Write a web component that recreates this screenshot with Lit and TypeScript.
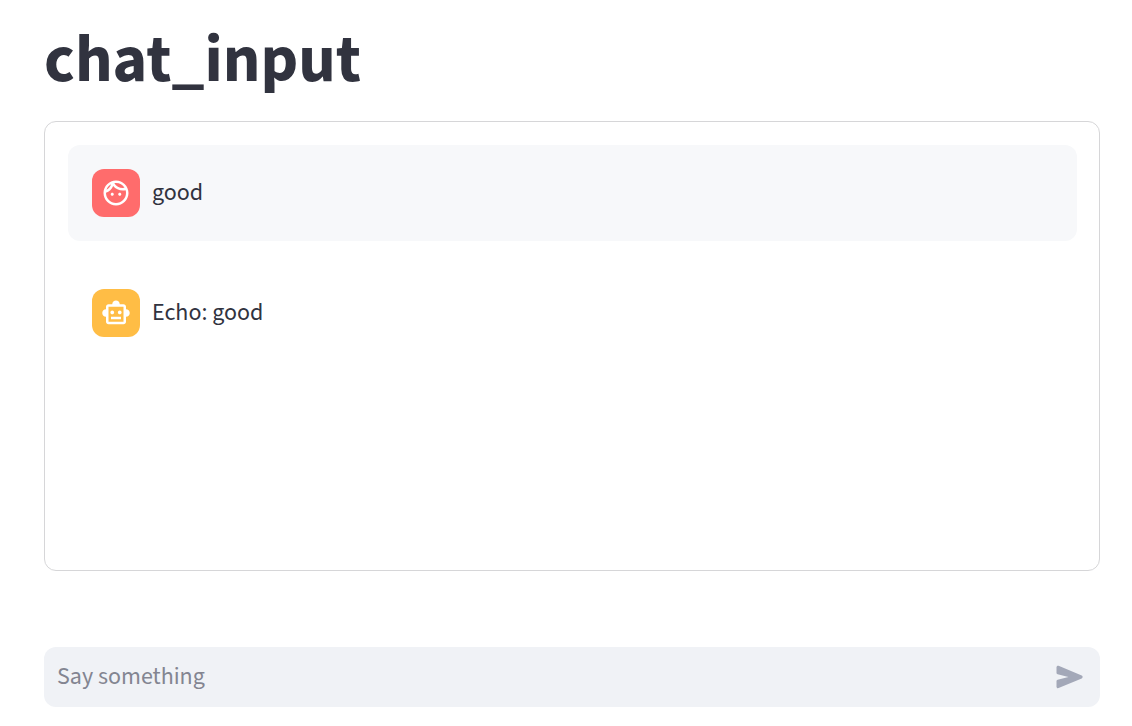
import { LitElement, html, css } from "lit";
import { customElement, state } from "lit/decorators.js";

interface Message {
  role: "user" | "assistant";
  text: string;
}

@customElement("chat-message")
class ChatMessage extends LitElement {
  static properties = { role: { type: String }, text: { type: String } };
  declare role: string;
  declare text: string;

  static styles = css`
    :host { display: block; }
    .message {
      display: flex;
      align-items: center;
      gap: 12px;
      padding: 24px;
      border-radius: 12px;
    }
    .user { background: #f7f8fa; }
    .avatar {
      display: grid;
      place-items: center;
      flex: none;
      width: 48px;
      height: 48px;
      border-radius: 12px;
      background: #ffbd45;
    }
    .user .avatar { background: #ff6c6c; }
    .avatar svg { width: 30px; height: 30px; fill: #fff; }
    .text { margin: 0; font-size: 24px; line-height: 36px; }
  `;

  render() {
    const user = this.role === "user";
    return html`
      <article class="message ${user ? "user" : "assistant"}">
        <div class="avatar">
          ${user
            ? html`<svg viewBox="0 0 24 24" aria-hidden="true"><path d="M10.25 13c0 .69-.56 1.25-1.25 1.25S7.75 13.69 7.75 13s.56-1.25 1.25-1.25 1.25.56 1.25 1.25zM15 11.75c-.69 0-1.25.56-1.25 1.25s.56 1.25 1.25 1.25 1.25-.56 1.25-1.25-.56-1.25-1.25-1.25zm7 .25c0 5.52-4.48 10-10 10S2 17.52 2 12 6.48 2 12 2s10 4.48 10 10zM10.66 4.12C12.06 6.44 14.6 8 17.5 8c.46 0 .91-.05 1.34-.12C17.44 5.56 14.9 4 12 4c-.46 0-.91.05-1.34.12zM4.42 9.47c1.71-.97 3.03-2.55 3.66-4.44C6.37 6 5.05 7.58 4.42 9.47zM20 12c0-.78-.12-1.53-.33-2.24-.7.15-1.42.24-2.17.24-3.13 0-5.92-1.44-7.76-3.69C8.69 8.87 6.6 10.88 4 11.86c.01.04 0 .09 0 .14 0 4.41 3.59 8 8 8s8-3.59 8-8z"/></svg>`
            : html`<svg viewBox="0 0 24 24" aria-hidden="true"><path d="M20 9V7c0-1.1-.9-2-2-2h-3c0-1.66-1.34-3-3-3S9 3.34 9 5H6c-1.1 0-2 .9-2 2v2c-1.66 0-3 1.34-3 3s1.34 3 3 3v4c0 1.1.9 2 2 2h12c1.1 0 2-.9 2-2v-4c1.66 0 3-1.34 3-3s-1.34-3-3-3zm-2 10H6V7h12v12zm-9-6c-.83 0-1.5-.67-1.5-1.5S8.17 10 9 10s1.5.67 1.5 1.5S9.83 13 9 13zm7.5-1.5c0 .83-.67 1.5-1.5 1.5s-1.5-.67-1.5-1.5.67-1.5 1.5-1.5 1.5.67 1.5 1.5zM8 15h8v2H8v-2z"/></svg>`}
        </div>
        <p class="text">${this.text}</p>
      </article>
    `;
  }
}

@customElement("app-root")
class AppRoot extends LitElement {
  @state() private messages: Message[] = [
    { role: "user", text: "good" },
    { role: "assistant", text: "Echo: good" },
  ];

  static styles = css`
    :host {
      display: block;
      box-sizing: border-box;
      padding: 24px 32px 19px 44px;
      font-family: "Source Sans 3", "Source Sans Pro", "Noto Sans", sans-serif;
      color: #31333f;
    }
    .title {
      margin: 0 0 25px;
      font-size: 66px;
      font-weight: 700;
      line-height: 72px;
    }
    .history {
      display: flex;
      flex-direction: column;
      gap: 24px;
      box-sizing: border-box;
      min-height: 450px;
      padding: 23px 22px 23px 23px;
      border: 1px solid #d6d6d8;
      border-radius: 12px;
    }
    .composer {
      display: flex;
      align-items: center;
      box-sizing: border-box;
      margin-top: 76px;
      min-height: 60px;
      padding: 0 12px 0 13px;
      border-radius: 12px;
      background: #f0f2f6;
    }
    .field {
      flex: 1;
      min-width: 0;
      padding: 0;
      border: 0;
      outline: 0;
      background: none;
      font: inherit;
      font-size: 24px;
      line-height: 36px;
      color: inherit;
    }
    .field::placeholder { color: #838591; opacity: 1; }
    .send {
      display: grid;
      place-items: center;
      padding: 0;
      border: 0;
      background: none;
      color: #a3a8b8;
    }
    .send svg { width: 36px; height: 36px; fill: currentColor; }
  `;

  private submit(event: Event) {
    event.preventDefault();
    const field = this.renderRoot.querySelector<HTMLInputElement>(".field")!;
    const text = field.value.trim();
    if (!text) return;
    this.messages = [
      ...this.messages,
      { role: "user", text },
      { role: "assistant", text: `Echo: ${text}` },
    ];
    field.value = "";
  }

  render() {
    return html`
      <main>
        <h1 class="title">chat_input</h1>
        <section class="history" aria-label="Messages">
          ${this.messages.map(
            (m) => html`<chat-message .role=${m.role} .text=${m.text}></chat-message>`
          )}
        </section>
        <form class="composer" @submit=${this.submit}>
          <input class="field" type="text" placeholder="Say something" aria-label="Say something" />
          <button class="send" type="submit" aria-label="Send">
            <svg viewBox="0 0 24 24" aria-hidden="true"><path d="M3 5.51v3.71c0 .46.31.86.76.97L11 12l-7.24 1.81c-.45.11-.76.51-.76.97v3.71c0 .72.73 1.2 1.39.92l15.42-6.49c.82-.34.82-1.5 0-1.84L4.39 4.58C3.73 4.31 3 4.79 3 5.51z"/></svg>
          </button>
        </form>
      </main>
    `;
  }
}
